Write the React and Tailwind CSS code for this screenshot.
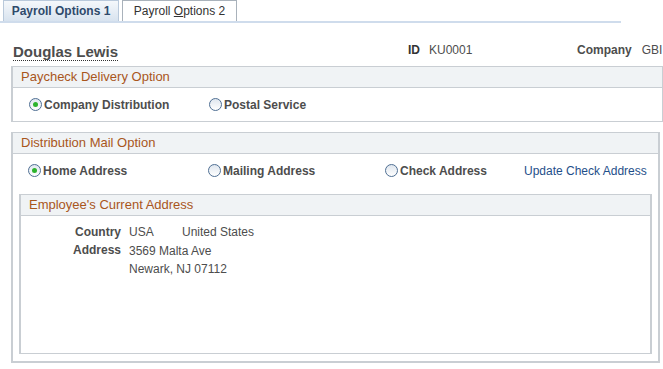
import React from 'react';

function Radio({ checked }) {
  return (
    <span className="w-[13px] h-[13px] rounded-full border border-[#4f6f93] bg-gradient-to-b from-[#dfe6ee] to-white flex items-center justify-center shrink-0">
      {checked && <span className="w-[5px] h-[5px] rounded-full bg-[#2db32d]"></span>}
    </span>
  );
}

function RadioItem({ checked, label, width }) {
  return (
    <div className={`flex items-center gap-[2px] ${width}`}>
      <Radio checked={checked} />
      <span className="font-bold text-[12px] text-[#4d4d4d]">{label}</span>
    </div>
  );
}

function BoxHeader({ title }) {
  return (
    <div className="h-[21px] bg-[#f0f3f5] border-b border-[#c9ced3] flex items-center px-[8px] text-[13px] text-[#a9561c]">
      {title}
    </div>
  );
}

function App() {
  return (
    <div className="w-[663px] h-[369px] bg-white overflow-hidden font-['Liberation_Sans',Arial,sans-serif]">
      {/* Tabs */}
      <div className="flex items-end gap-[3px] pl-[3px] pt-[1px] h-[21px]">
        <div className="w-[116px] h-[21px] border border-b-0 border-[#b9c9db] bg-gradient-to-b from-[#f5f8fb] to-[#d8e3ef] flex items-center justify-center text-[12px] font-bold text-[#2f4a6b]">
          Payroll Options 1
        </div>
        <div className="w-[115px] h-[21px] border border-b-0 border-[#a9b2bb] bg-white flex items-center justify-center text-[12px] text-[#333]">
          <span>
            Payroll <span className="underline">O</span>ptions 2
          </span>
        </div>
      </div>
      <div className="w-[621px] h-[2px] bg-[#cfdcec]"></div>

      {/* Employee header */}
      <div className="flex items-start pl-[13px] pt-[17px] h-[43px]">
        <div className="w-[395px]">
          <span className="inline-block text-[15px] font-bold text-[#4d4d4d] leading-[17px] border-b border-dotted border-[#333]">
            Douglas Lewis
          </span>
        </div>
        <div className="w-[169px] flex gap-[9px] text-[12px] text-[#4d4d4d] pt-[1px]">
          <span className="font-bold text-[#333]">ID</span>
          <span>KU0001</span>
        </div>
        <div className="flex gap-[10px] text-[12px] text-[#4d4d4d] pt-[1px]">
          <span className="font-bold">Company</span>
          <span>GBI</span>
        </div>
      </div>

      {/* Paycheck Delivery Option */}
      <div className="ml-[11px] w-[652px] h-[56px] border border-[#c9ced3] border-l-2">
        <BoxHeader title="Paycheck Delivery Option" />
        <div className="flex items-center h-[33px] pl-[16px]">
          <RadioItem checked label="Company Distribution" width="w-[180px]" />
          <RadioItem label="Postal Service" width="w-[120px]" />
        </div>
      </div>

      {/* Distribution Mail Option */}
      <div className="ml-[11px] mt-[10px] w-[649px] h-[231px] border border-[#c9ced3] border-l-2 border-r-2 border-b-2">
        <BoxHeader title="Distribution Mail Option" />
        <div className="flex items-center h-[33px] pl-[15px]">
          <RadioItem checked label="Home Address" width="w-[180px]" />
          <RadioItem label="Mailing Address" width="w-[177px]" />
          <RadioItem label="Check Address" width="w-[139px]" />
          <span className="text-[12px] text-[#1f4f8a]">Update Check Address</span>
        </div>

        <div className="ml-[6px] mt-[7px] w-[633px] h-[160px] border border-[#c9ced3] border-l-2 border-r-2">
          <BoxHeader title="Employee's Current Address" />
          <div className="pt-[7px] text-[12px] text-[#4d4d4d] leading-[18px]">
            <div className="flex">
              <span className="w-[100px] text-right font-bold">Country</span>
              <span className="ml-[8px] w-[53px]">USA</span>
              <span>United States</span>
            </div>
            <div className="flex">
              <span className="w-[100px] text-right font-bold">Address</span>
              <span className="ml-[8px] pt-[1px]">
                3569 Malta Ave
                <br />
                Newark, NJ 07112
              </span>
            </div>
          </div>
        </div>
      </div>
    </div>
  );
}

export default App;
